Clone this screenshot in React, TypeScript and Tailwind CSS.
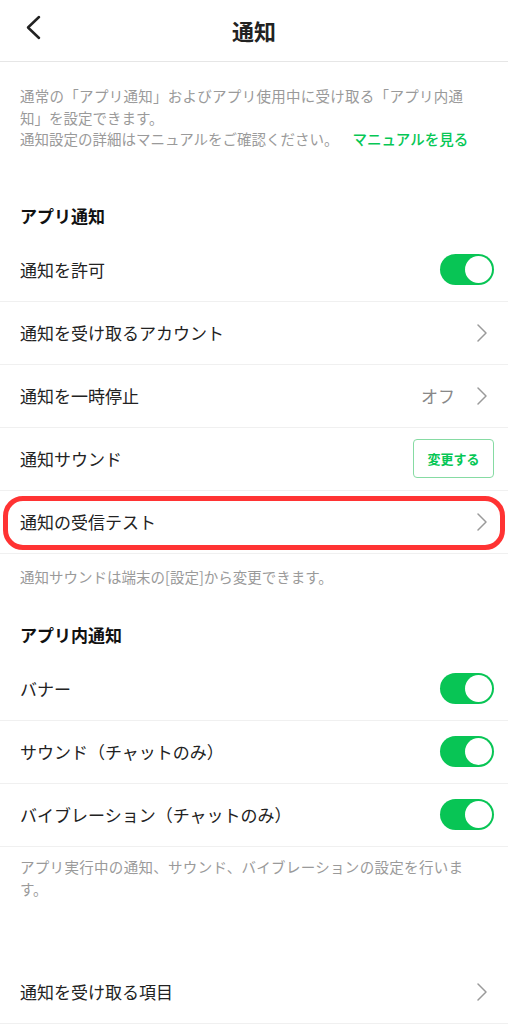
const font = { fontFamily: '"Noto Sans CJK JP", "Noto Sans", sans-serif' };

function Toggle() {
  return (
    <div className="w-[54px] h-[31px] rounded-full bg-[#08c555] flex items-center justify-end pr-[2px]">
      <div className="w-[27px] h-[27px] rounded-full bg-white" />
    </div>
  );
}

function Chevron() {
  return (
    <svg width="12" height="20" viewBox="0 0 12 20" className="mr-[6px]">
      <polyline points="2,2 10,10 2,18" fill="none" stroke="#9a9a9a" strokeWidth="1.5" strokeLinecap="round" strokeLinejoin="round" />
    </svg>
  );
}

function Row({ label, children }: { label: string; children?: React.ReactNode }) {
  return (
    <div className="h-[63px] border-b border-[#f0f0f0] flex items-center justify-between pl-5 pr-[14px]">
      <span className="text-[17px] text-[#222]">{label}</span>
      <div className="flex items-center">{children}</div>
    </div>
  );
}

export default function App() {
  return (
    <div className="w-[508px] h-[1024px] bg-white overflow-hidden" style={font}>
      {/* Header */}
      <header className="h-[62px] border-b border-[#e6e6e6] relative flex items-center justify-center">
        <svg width="24" height="28" viewBox="0 0 24 28" className="absolute left-[22px] top-[14px]">
          <polyline points="17,3 6,13.5 17,24" fill="none" stroke="#222" strokeWidth="2.5" strokeLinecap="round" strokeLinejoin="round" />
        </svg>
        <h1 className="text-[22px] font-bold text-[#222]">通知</h1>
      </header>

      {/* Description */}
      <div className="pl-5 pr-[45px] pt-[23px] text-[14.5px] leading-[21.5px] text-[#9a9a9a]">
        <p className="text-justify">通常の「アプリ通知」およびアプリ使用中に受け取る「アプリ内通知」を設定できます。</p>
        <p className="whitespace-nowrap">
          通知設定の詳細はマニュアルをご確認ください。
          <span className="ml-[14px] text-[#06c755] font-medium">マニュアルを見る</span>
        </p>
      </div>

      {/* App notifications */}
      <div className="px-5 pt-[54px] pb-[11px] text-[17px] leading-[24px] font-bold text-[#111]">アプリ通知</div>
      <Row label="通知を許可"><Toggle /></Row>
      <Row label="通知を受け取るアカウント"><Chevron /></Row>
      <Row label="通知を一時停止">
        <span className="text-[17px] text-[#888] mr-[21px]">オフ</span>
        <Chevron />
      </Row>
      <div className="h-[63px] border-b border-[#f0f0f0] flex items-center justify-between pl-5 pr-[14px]">
        <span className="text-[17px] text-[#222]">通知サウンド</span>
        <button className="w-[81px] h-[39px] border border-[#86dba3] rounded-[4px] text-[13px] font-bold text-[#06c755]">
          変更する
        </button>
      </div>
      <div className="relative">
        <Row label="通知の受信テスト"><Chevron /></Row>
        <div className="absolute left-[3px] right-[3px] top-[5px] h-[54px] rounded-[20px] border-[5px] border-[#ff3333]" />
      </div>
      <p className="px-5 pt-[12px] text-[14.5px] leading-[22px] text-[#9a9a9a]">通知サウンドは端末の[設定]から変更できます。</p>

      {/* In-app notifications */}
      <div className="px-5 pt-[35px] pb-[11px] text-[17px] leading-[24px] font-bold text-[#111]">アプリ内通知</div>
      <Row label="バナー"><Toggle /></Row>
      <Row label="サウンド（チャットのみ）"><Toggle /></Row>
      <Row label="バイブレーション（チャットのみ）"><Toggle /></Row>
      <p className="pl-5 pr-[45px] pt-[9px] text-[14.5px] leading-[22px] text-[#9a9a9a] text-justify">
        アプリ実行中の通知、サウンド、バイブレーションの設定を行います。
      </p>

      <div className="h-[61px]" />
      <Row label="通知を受け取る項目"><Chevron /></Row>
    </div>
  );
}
